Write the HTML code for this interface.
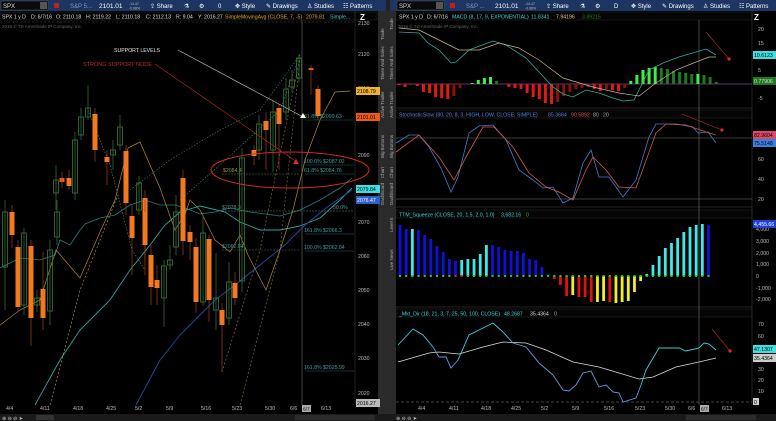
<!DOCTYPE html>
<html><head><meta charset="utf-8"><style>
html,body{margin:0;padding:0;background:#000;width:776px;height:421px;overflow:hidden;font-family:"Liberation Sans",sans-serif}
svg{display:block}
text{font-family:"Liberation Sans",sans-serif}
</style></head><body>
<svg id="s" width="776" height="421" viewBox="0 0 776 421" xmlns="http://www.w3.org/2000/svg">
<rect width="776" height="421" fill="#000"/>
<!-- toolbars -->
<rect x="0" y="0" width="386" height="11" fill="#1c3563"/>
<rect x="390" y="0" width="386" height="11" fill="#1c3563"/>
<rect x="386" y="0" width="4" height="421" fill="#222"/>
<rect x="1" y="1" width="47" height="9" fill="#0a0a0a" stroke="#555" stroke-width="0.5"/>
<text x="3" y="8" font-size="6" fill="#ddd">SPX</text>
<rect x="40" y="2" width="7" height="7" fill="#555"/>
<rect x="54" y="3" width="5" height="5" fill="#c02020"/>
<text x="70" y="8" font-size="6" fill="#8896b0">S&amp;P 5...</text>
<text x="99" y="8" font-size="6.5" fill="#fff">2101.01</text>
<text x="129" y="5" font-size="3.5" fill="#bbb">-14.47</text><text x="129" y="9.5" font-size="3.5" fill="#bbb">-0.68%</text>
<g font-size="6" fill="#fff">
<text x="150" y="8">⇪ Share</text><text x="184" y="8">⚗</text><text x="199" y="8">⚙</text><text x="218" y="8">0</text>
<text x="235" y="8">✥ Style</text><text x="266" y="8">✎ Drawings</text><text x="307" y="8">♙ Studies</text><text x="343" y="8">☷ Patterns</text>
</g>
<rect x="397" y="1" width="47" height="9" fill="#0a0a0a" stroke="#555" stroke-width="0.5"/>
<text x="399" y="8" font-size="6" fill="#ddd">SPX</text>
<rect x="436" y="2" width="7" height="7" fill="#555"/>
<rect x="450" y="3" width="5" height="5" fill="#c02020"/>
<text x="466" y="8" font-size="6" fill="#8896b0">S&amp;P ...</text>
<text x="495" y="8" font-size="6.5" fill="#fff">2101.01</text>
<text x="525" y="5" font-size="3.5" fill="#bbb">-14.47</text><text x="525" y="9.5" font-size="3.5" fill="#bbb">-0.68%</text>
<g font-size="6" fill="#fff">
<text x="546" y="8">⇪ Share</text><text x="580" y="8">⚗</text><text x="595" y="8">⚙</text><text x="614" y="8">D</text>
<text x="631" y="8">✥ Style</text><text x="662" y="8">✎ Drawings</text><text x="703" y="8">♙ Studies</text><text x="739" y="8">☷ Patterns</text>
</g>
<!-- side tab strips -->
<rect x="378" y="11" width="8" height="410" fill="#2a2a2a"/>
<rect x="386" y="11" width="10" height="410" fill="#2a2a2a"/>
<g font-size="4.5" fill="#aaa">
<text transform="translate(384,40) rotate(-90)">Trade</text>
<text transform="translate(384,80) rotate(-90)">Times And Sales</text>
<text transform="translate(384,118) rotate(-90)">Active Trader</text>
<text transform="translate(384,158) rotate(-90)">Big Buttons</text>
<text transform="translate(384,178) rotate(-90)">Chart</text>
<text transform="translate(384,205) rotate(-90)">Dashboard</text>
<text transform="translate(393,30) rotate(-90)">Trade</text>
<text transform="translate(393,80) rotate(-90)">Times And Sales</text>
<text transform="translate(393,118) rotate(-90)">Active Trader</text>
<text transform="translate(393,158) rotate(-90)">Big Buttons</text>
<text transform="translate(393,178) rotate(-90)">Chart</text>
<text transform="translate(393,205) rotate(-90)">Dashboard</text>
<text transform="translate(393,232) rotate(-90)">Level II</text>
<text transform="translate(393,270) rotate(-90)">Live News</text>
</g>
<!-- left header -->
<g font-size="5.2" fill="#ddd">
<rect x="0" y="12" width="377" height="8" fill="#050505" stroke="#333" stroke-width="0.4"/>
<text x="2" y="18.5">SPX 1 y D</text><text x="31" y="18.5">D: 6/7/16</text><text x="56" y="18.5">O: 2110.18</text>
<text x="86" y="18.5">H: 2119.22</text><text x="116" y="18.5">L: 2110.18</text><text x="146" y="18.5">C: 2112.13</text>
<text x="176" y="18.5">R: 9.04</text><text x="198" y="18.5">Y: 2016.27</text>
<text x="225" y="18.5" fill="#e0a030">SimpleMovingAvg (CLOSE, 7, -5)</text><text x="306" y="18.5" fill="#e0a030">2079.81</text>
<text x="330" y="18.5" fill="#40c0c0">Simple...</text>
</g>
<text x="2" y="28" font-size="4.5" fill="#666">2016 © TD Ameritrade IP Company, Inc.</text>
<line x1="355" y1="11" x2="355" y2="405" stroke="#444" stroke-width="0.5"/>
<!-- right header rows -->
<g font-size="5.2">
<rect x="396" y="12" width="356" height="8" fill="#050505" stroke="#333" stroke-width="0.4"/>
<text x="399" y="18.5" fill="#ddd">SPX 1 y D</text><text x="427" y="18.5" fill="#ddd">D: 6/7/16</text>
<text x="452" y="18.5" fill="#40d0d0">MACD (8, 17, 9, EXPONENTIAL)</text><text x="531" y="18.5" fill="#40d0d0">11.8341</text>
<text x="556" y="18.5" fill="#e0d0a0">7.94196</text><text x="582" y="18.5" fill="#208020">3.89215</text>
<rect x="396" y="110" width="356" height="8" fill="#050505" stroke="#333" stroke-width="0.4"/>
<text x="399" y="116.5" fill="#5080e0">StochasticSlow (80, 20, 8, 3, HIGH, LOW, CLOSE, SIMPLE)</text>
<text x="548" y="116.5" fill="#5080e0">85.3664</text><text x="571" y="116.5" fill="#e05050">90.5892</text>
<text x="593" y="116.5" fill="#aaa">80</text><text x="603" y="116.5" fill="#aaa">20</text>
<rect x="396" y="210" width="356" height="8" fill="#050505" stroke="#333" stroke-width="0.4"/>
<text x="399" y="216.5" fill="#40d0d0">TTM_Squeeze (CLOSE, 20, 1.5, 2.0, 1.0)</text><text x="501" y="216.5" fill="#40d0d0">3,682.16</text><text x="526" y="216.5" fill="#20c020">0</text>
<rect x="396" y="309" width="356" height="8" fill="#050505" stroke="#333" stroke-width="0.4"/>
<text x="399" y="315.5" fill="#40d0d0">_Mkt_Dir (18, 21, 3, 7, 25, 50, 100, CLOSE)</text><text x="504" y="315.5" fill="#40d0d0">48.2687</text><text x="530" y="315.5" fill="#ddd">35.4364</text><text x="554" y="315.5" fill="#aaa">0</text>
</g>
<text x="398" y="28" font-size="4.5" fill="#666">2016 © TD Ameritrade IP Company, Inc.</text>
<line x1="396" y1="108" x2="752" y2="108" stroke="#444" stroke-width="0.6"/>
<line x1="396" y1="207" x2="752" y2="207" stroke="#444" stroke-width="0.6"/>
<line x1="396" y1="307" x2="752" y2="307" stroke="#444" stroke-width="0.6"/>
<line x1="752" y1="11" x2="752" y2="405" stroke="#444" stroke-width="0.5"/>
<!-- cursor lines -->
<line x1="302" y1="20" x2="302" y2="405" stroke="#888" stroke-width="0.5"/>
<line x1="699" y1="20" x2="699" y2="405" stroke="#888" stroke-width="0.5"/>
<g id="dyn"></g>
<!-- bottom -->
<rect x="0" y="414" width="776" height="7" fill="#1a1a1a"/>
<rect x="36" y="415" width="18" height="5" fill="#333"/>
<rect x="295" y="415" width="80" height="5" fill="#2c2c2c"/>
<rect x="686" y="415" width="70" height="5" fill="#2c2c2c"/>
<g font-size="5" fill="#ccc"><text x="2" y="420">⊕ ⊖ ⊖ ➤</text><text x="396" y="420">⊕ ⊖ ⊖ ➤</text></g>
</svg>
<script>
var NS="http://www.w3.org/2000/svg",G=document.getElementById("dyn");
function el(t,a,txt){var e=document.createElementNS(NS,t);for(var k in a)e.setAttribute(k,a[k]);if(txt!=null)e.textContent=txt;G.appendChild(e);return e}
function pl(pts,c,w,d){el("polyline",{points:pts.map(p=>p.join(",")).join(" "),fill:"none",stroke:c,"stroke-width":w||0.8,"stroke-dasharray":d||"none"})}
function tag(x,y,t,bg,fg){el("rect",{x:x,y:y-4,width:24,height:8,fill:bg});el("text",{x:x+1,y:y+2,"font-size":5.2,fill:fg||"#000"},t)}
function lab(x,y,t,c){el("text",{x:x,y:y,"font-size":5.2,fill:c||"#bbb"},t)}
// left price axis
[["2130",23],["2120",54],["2110",88],["2090",155],["2070",222],["2060",256],["2050",290],["2040",324],["2030",358],["2020",393]].forEach(a=>lab(358,a[1]+2,a[0]));
// left lines
pl([[35,405],[60,360],[80,330],[110,300],[130,270],[150,245],[165,225],[180,212],[200,206],[225,212],[240,222],[260,230],[280,230],[300,226],[320,218],[340,200],[352,188]],"#2aa8a0",0.9);
pl([[0,268],[20,258],[40,260],[55,255],[60,240],[70,245],[80,230],[85,224],[100,218],[115,215],[130,205],[145,200],[160,205],[175,205],[185,208],[200,214],[215,212],[230,208],[250,212],[280,216],[300,210],[320,200],[340,188],[352,178]],"#208080",0.8);
pl([[136,405],[160,360],[180,335],[200,315],[215,300],[235,285],[260,265],[285,245],[305,225],[330,205],[352,190]],"#2a4aa0",0.9);
pl([[0,325],[20,310],[40,300],[56,250],[80,278],[90,255],[100,232],[115,200],[128,148],[140,142],[160,188],[175,230],[185,214],[190,200],[200,210],[215,240],[230,252],[240,235],[248,255],[266,290],[280,250],[293,210],[305,160],[320,120],[335,92],[350,91]],"#b08840",0.7);
pl([[50,405],[80,290],[100,240],[118,195]],"#c8a060",0.6,"2,2");
pl([[88,110],[110,165],[118,196],[132,250],[145,270]],"#6a8a5a",0.6,"1.5,1.5");
pl([[130,190],[170,160],[220,130],[260,110],[300,55]],"#3a8a6a",0.6,"1.5,1.5");
pl([[180,200],[220,165],[280,110],[300,55]],"#3a8a6a",0.6,"1.5,1.5");
pl([[222,372],[260,250],[300,58]],"#8a7a50",0.6,"2,2");
pl([[240,405],[280,250],[300,58]],"#8a7a50",0.6,"2,2");
// fib lines
[[118,"61.8%  $2099.63",304],[163,"100.0%  $2087.02",304],[172,"61.8%  $2084.76",304],[232,"161.8%  $2066.3",304],[249,"100.0%  $2062.84",304],[369,"161.8%  $2025.99",304]].forEach(a=>{el("line",{x1:305,y1:a[0]+2,x2:354,y2:a[0]+2,stroke:"#1a6a6a","stroke-width":0.6});lab(a[2],a[0],a[1],"#40a0a0")});
el("line",{x1:222,y1:174,x2:300,y2:174,stroke:"#6a7a30","stroke-width":0.5,"stroke-dasharray":"2,1"});lab(223,172,"$2084.4","#8a9a40");
el("line",{x1:222,y1:211,x2:354,y2:211,stroke:"#777","stroke-width":0.5,"stroke-dasharray":"2,1"});lab(222,209,"$2078.3","#4a9a8a");lab(333,209,"50.0%","#40a0a0");
el("line",{x1:222,y1:250,x2:300,y2:250,stroke:"#777","stroke-width":0.4,"stroke-dasharray":"2,1"});lab(222,248,"$2062.84","#4a9a8a");
el("line",{x1:0,y1:22,x2:355,y2:22,stroke:"#555","stroke-width":0.4,"stroke-dasharray":"2,2"});
// candles [x,top,bot,wt,wb,down]
var C=[[56,180,193,165,210,0],[62,178,182,172,188,2],[69,178,186,170,190,1],[75,140,193,132,200,0],[81,117,135,108,140,0],[88,108,117,85,120,0],[95,114,150,108,162,1],[107,157,162,150,185,1],[113,150,155,140,170,0],[120,127,145,115,150,0],[126,151,203,145,215,1],[139,183,210,176,215,0],[145,198,235,190,260,1],[5,212,267,200,310,0],[12,212,235,205,248,1],[18,247,307,240,312,1],[24,233,305,228,315,0],[31,246,318,240,346,1],[37,298,305,290,312,0],[43,289,318,252,330,1],[50,250,311,240,325,0],[57,212,237,200,245,0],[132,216,238,205,275,1],[145,212,245,200,275,1],[151,255,287,245,305,1],[157,280,288,265,305,1],[164,266,298,260,327,0],[170,260,265,245,270,0],[176,212,247,195,255,0],[183,178,241,170,255,1],[190,232,242,225,260,1],[196,247,302,238,313,1],[203,233,302,215,306,0],[209,239,300,235,322,1],[216,298,310,253,330,0],[222,310,325,303,372,1],[229,282,318,262,325,0],[235,283,298,272,305,1],[242,158,281,148,292,0],[254,150,156,145,165,1],[259,124,150,115,160,0],[266,121,130,112,170,1],[273,112,150,100,172,0],[279,108,124,104,170,1],[286,89,112,78,120,0],[292,80,87,70,92,0],[299,58,78,54,82,0],[311,68,70,65,95,2],[318,89,116,85,120,1]];
C.forEach(c=>{var col=c[5]?"#e05a20":"#3a7a3a",fc=c[5]?"#f47820":"none";if(c[5]==2){col="#e05a20";fc="#e05a20"}
el("line",{x1:c[0],y1:c[3],x2:c[0],y2:c[4],stroke:c[5]?"#a04020":"#3a7a3a","stroke-width":0.7});
el("rect",{x:c[0]-2.5,y:c[1],width:5,height:Math.max(c[2]-c[1],1),fill:fc,stroke:c[5]?"none":col,"stroke-width":0.8})});
// annotations
lab(114,52,"SUPPORT LEVELS","#e8e8e8");el("text",{x:83,y:66,"font-size":5.5,fill:"#c02828"},"STRONG SUPPORT NODE");
el("line",{x1:178,y1:50,x2:305,y2:118,stroke:"#ccc","stroke-width":0.6});el("polygon",{points:"300,118 306,118 303,113",fill:"#fff"});
el("line",{x1:155,y1:64,x2:297,y2:162,stroke:"#c02828","stroke-width":0.6});el("polygon",{points:"293,164 299,164 296,159",fill:"#e02828"});
el("ellipse",{cx:290,cy:170,rx:79,ry:18,fill:"none",stroke:"#d02828","stroke-width":1});
tag(356,91,"2108.79","#f0b030");tag(356,117,"2101.01","#f05a18");tag(356,189,"2079.84","#40e0e0");tag(356,200,"2076.47","#2a60c8","#fff");tag(356,403,"2016.27","#bbb");
// dates
[["4/4",6],["4/11",40],["4/18",73],["4/25",106],["5/2",135],["5/9",166],["5/16",201],["5/23",232],["5/30",265],["6/6",290],["6/13",321]].forEach(a=>lab(a[1],410,a[0]));
el("rect",{x:302,y:405,width:9,height:7,fill:"#aaa"});el("text",{x:303,y:410.5,"font-size":4.8,fill:"#000"},"6/7");
[["4/4",418],["4/11",449],["4/18",481],["4/25",511],["5/2",541],["5/9",572],["5/16",604],["5/23",635],["5/30",665],["6/6",688],["6/13",722]].forEach(a=>lab(a[1],410,a[0]));
el("rect",{x:700,y:405,width:9,height:7,fill:"#aaa"});el("text",{x:701,y:410.5,"font-size":4.8,fill:"#000"},"6/7");
// MACD
[["20",31],["15",45],["5",72],["-5",100]].forEach(a=>lab(758,a[1],a[0]));
el("line",{x1:396,y1:84,x2:752,y2:84,stroke:"#9040a0","stroke-width":0.7});
var M=[-1,-3,-1,-2,-8,-9,-13,-14,-15,-12,-4,0,1,4,6,7,3,0,-3,-4,-5,-9,-13,-15,-19,-20,-18,-12,-8,-5,-4,-3,-5,-7,-5,-6,-7,-4,3,9,14,16,17,16,15,13,12,11,10,10,9,7,2];
M.forEach((v,i)=>{if(!v)return;var x=399+i*6.1,p=i?M[i-1]:0,c;
if(v>0)c=v>=p?"#40f040":"#1f7a1f";else c=v<=p?"#e01818":"#8a1010";
el("rect",{x:x-1.5,y:v>0?84-v:84,width:3,height:Math.abs(v),fill:c})});
pl([[399,32],[419,33],[428,43],[439,50],[451,63],[456,62],[469,50],[493,41],[506,45],[526,58],[539,72],[553,87],[563,94],[573,97],[586,90],[599,93],[613,98],[623,101],[634,100],[649,70],[663,63],[679,57],[706,49],[716,55]],"#2ab0a0",0.8);
pl([[399,28],[419,30],[439,40],[459,50],[479,50],[499,43],[519,48],[539,60],[563,78],[593,87],[619,93],[639,96],[656,83],[676,70],[696,62],[709,57],[716,57]],"#c8b890",0.7);
tag(753,55,"10.6123","#40e0e0");tag(753,81,"0.77906","#1f7a1f","#ddd");
// Stoch
el("line",{x1:396,y1:138,x2:752,y2:138,stroke:"#777","stroke-width":0.5});el("line",{x1:396,y1:199,x2:752,y2:199,stroke:"#777","stroke-width":0.5});
[["60",161],["40",181],["20",201]].forEach(a=>lab(758,a[1],a[0]));
pl([[396,143],[409,135],[419,135],[429,147],[441,168],[451,192],[458,177],[469,133],[479,126],[493,125],[506,140],[519,170],[533,180],[543,188],[553,187],[563,203],[573,198],[583,163],[591,150],[599,177],[609,177],[623,197],[636,180],[649,137],[656,124],[676,124],[693,127],[698,133],[708,132],[716,143]],"#4a7ad0",0.8);
pl([[396,152],[419,135],[439,157],[454,180],[466,157],[483,127],[494,127],[513,147],[529,173],[546,187],[559,192],[573,200],[586,170],[593,157],[606,170],[619,187],[636,188],[656,133],[666,124],[686,125],[706,132],[716,135]],"#d05a50",0.8);
tag(753,135,"82.9604","#e04868");tag(753,143,"75.5148","#3a80e0");
// TTM
[["4,000",231],["3,000",243],["2,000",255],["1,000",266],["0",278],["-1,000",290],["-2,000",301]].forEach(a=>lab(756,a[1],a[0]));
var T=[[51,"b"],[47,"b"],[47,"c"],[46,"b"],[41,"b"],[37,"b"],[30,"b"],[24,"b"],[17,"b"],[15,"b"],[16,"c"],[17,"c"],[17,"c"],[22,"c"],[31,"c"],[31,"b"],[29,"b"],[26,"b"],[25,"b"],[25,"b"],[23,"b"],[17,"b"],[16,"b"],[9,"b"],[2,"b"],[-3,"r"],[-9,"r"],[-20,"r"],[-19,"y"],[-21,"r"],[-21,"r"],[-26,"r"],[-26,"y"],[-25,"y"],[-26,"r"],[-27,"y"],[-26,"y"],[-25,"y"],[-16,"y"],[-5,"y"],[2,"c"],[11,"c"],[20,"c"],[28,"c"],[33,"c"],[38,"c"],[44,"c"],[49,"c"],[51,"c"],[52,"c"],[51,"b"]];
var TC={b:"#1010d8",c:"#40e8e8",r:"#e01010",y:"#f0f020"};
T.forEach((t,i)=>{var x=400+i*6.17,v=t[0];el("rect",{x:x-1.4,y:v>0?276-v:276,width:2.8,height:Math.abs(v),fill:TC[t[1]]});
el("rect",{x:x-1,y:275,width:2,height:2,fill:(i==9||i==10)?"#e02020":"#20d020"})});
tag(753,224,"4,455.66","#1f3fd8","#fff");
// Mkt dir
[["70",326],["60",338],["30",371],["20",382],["10",393]].forEach(a=>lab(758,a[1],a[0]));
el("line",{x1:396,y1:402,x2:752,y2:402,stroke:"#888","stroke-width":0.5,"stroke-dasharray":"3,2"});
el("rect",{x:753,y:398,width:6,height:7,fill:"#ccc"});lab(754,404,"0","#000");
pl([[398,362],[429,353],[439,352],[459,354],[483,347],[503,342],[526,343],[546,350],[573,362],[599,367],[619,373],[639,379],[653,377],[676,367],[699,362],[716,358]],"#ddd",0.7);
pl([[398,345],[413,329],[423,335],[433,347]],"#3ad0e0",0.9);
pl([[433,347],[439,357],[446,357],[451,368],[458,360]],"#6a9ae0",0.9);
pl([[458,360],[469,335],[479,330],[493,323],[503,332],[513,343]],"#3ad0e0",0.9);
pl([[513,343],[526,347],[539,363],[553,375],[563,390],[569,391],[576,385],[583,373],[591,371],[599,387],[606,385],[613,392],[619,393],[623,402],[636,398],[641,385]],"#6a9ae0",0.9);
pl([[641,385],[646,370],[659,348],[679,348],[686,351],[699,348],[704,343],[709,344],[716,350]],"#3ad0e0",0.9);
tag(753,349,"47.1307","#40e0e0");tag(753,358,"35.4364","#ccc");
// red arrows
function arr(x1,y1,x2,y2){el("line",{x1:x1,y1:y1,x2:x2,y2:y2,stroke:"#c02828","stroke-width":0.6});el("circle",{cx:x2,cy:y2,r:1.6,fill:"#e02828"})}
arr(706,32,729,59);arr(682,114,722,130);arr(712,329,730,351);
// Z icons
[[358,13],[752,13]].forEach(p=>el("text",{x:p[0]+2,y:p[1]+7,"font-size":8,fill:"#fff","font-weight":"bold"},"Z"));
</script>
</body></html>
